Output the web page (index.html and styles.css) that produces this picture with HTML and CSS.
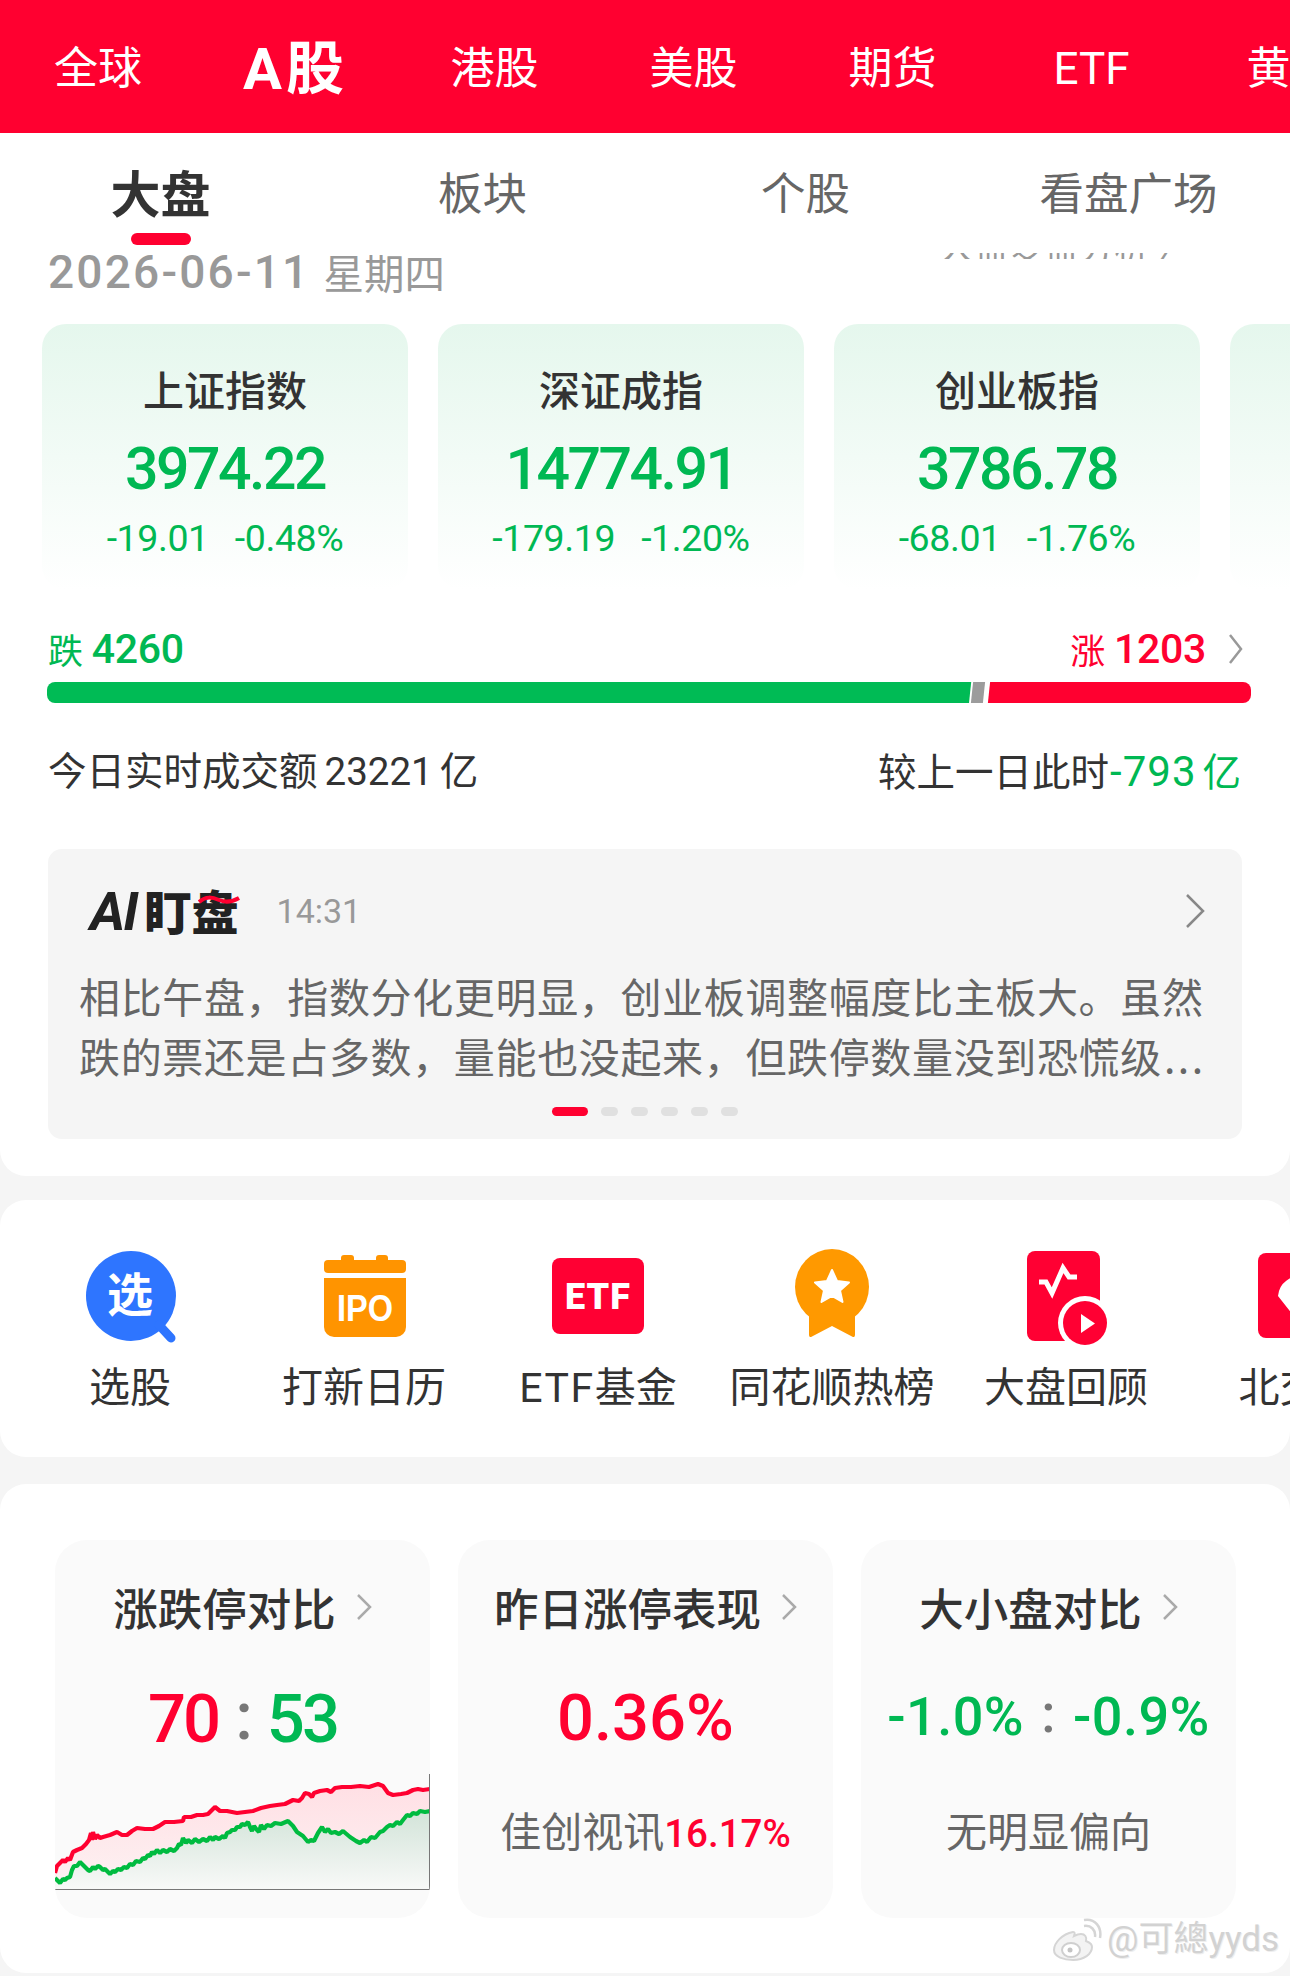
FILE: index.html
```html
<!DOCTYPE html>
<html lang="zh-CN">
<head>
<meta charset="utf-8">
<title>A股 大盘</title>
<link rel="stylesheet" href="styles.css">
</head>
<body>
<div class="page">
  <section class="panel panel-main">
    <nav class="market-nav">
      <span class="market-item">全球</span>
      <span class="market-item market-active">A股</span>
      <span class="market-item">港股</span>
      <span class="market-item">美股</span>
      <span class="market-item">期货</span>
      <span class="market-item">ETF</span>
      <span class="market-item">黄金</span>
    </nav>
    <div class="sub-tabs">
      <span class="sub-tab sub-active">大盘<i class="sub-indicator"></i></span>
      <span class="sub-tab">板块</span>
      <span class="sub-tab">个股</span>
      <span class="sub-tab">看盘广场</span>
    </div>
    <div class="date-row">
      <span class="date-num">2026-06-11</span>
      <span class="date-week">星期四</span>
      <span class="date-clip"><span class="date-link">大盘复盘分析 〉</span></span>
    </div>
    <div class="index-row">
      <div class="index-card">
        <div class="index-name">上证指数</div>
        <div class="index-value">3974.22</div>
        <div class="index-change"><span>-19.01</span><span>-0.48%</span></div>
      </div>
      <div class="index-card">
        <div class="index-name">深证成指</div>
        <div class="index-value">14774.91</div>
        <div class="index-change"><span>-179.19</span><span>-1.20%</span></div>
      </div>
      <div class="index-card">
        <div class="index-name">创业板指</div>
        <div class="index-value">3786.78</div>
        <div class="index-change"><span>-68.01</span><span>-1.76%</span></div>
      </div>
      <div class="index-card"></div>
    </div>
    <div class="count-row">
      <span class="count count-down"><b>跌</b>4260</span>
      <span class="count count-up"><b>涨</b>1203
        <svg class="count-chevron" viewBox="0 0 15 32"><path d="M2 2 L13 16 L2 30"/></svg>
      </span>
    </div>
    <div class="ratio-bar">
      <span class="ratio-down"></span>
      <span class="ratio-flat"></span>
      <span class="ratio-up"></span>
    </div>
    <div class="turnover-row">
      <span>今日实时成交额<span class="turnover-num">23221</span>亿</span>
      <span>较上一日此时<em class="turnover-delta"><span class="turnover-num">-793</span>亿</em></span>
    </div>
    <div class="ai-card">
      <div class="ai-head">
        <span class="ai-logo"><span class="ai-latin">AI</span>盯盘
          <svg class="ai-wave" viewBox="0 0 42 12"><path d="M1 8 C8 2 14 3 21 6 C28 9 34 8 41 4"/></svg>
        </span>
        <span class="ai-time">14:31</span>
        <svg class="ai-chevron" viewBox="0 0 20 36"><path d="M2 2 L18 18 L2 34"/></svg>
      </div>
      <p class="ai-line">相比午盘，指数分化更明显，创业板调整幅度比主板大。虽然</p>
      <p class="ai-line">跌的票还是占多数，量能也没起来，但跌停数量没到恐慌级<span class="ai-more">...</span></p>
      <div class="ai-dots">
        <i class="dot dot-on"></i><i class="dot"></i><i class="dot"></i><i class="dot"></i><i class="dot"></i><i class="dot"></i>
      </div>
    </div>
  </section>

  <section class="panel panel-tools">
    <div class="tool">
      <svg class="tool-icon" viewBox="0 0 100 100">
        <circle cx="51" cy="48" r="45" fill="#2e75ff"/>
        <path d="M79 77 L91 90" stroke="#2e75ff" stroke-width="9" stroke-linecap="round"/>
        <text class="glyph glyph-cjk" x="50" y="63" font-size="46" text-anchor="middle" fill="#fff">选</text>
      </svg>
      <span class="tool-label">选股</span>
    </div>
    <div class="tool">
      <svg class="tool-icon" viewBox="0 0 100 100">
        <rect x="27" y="7" width="13" height="10" rx="3" fill="#ff9400"/>
        <rect x="62" y="7" width="12" height="10" rx="3" fill="#ff9400"/>
        <rect x="10" y="12" width="82" height="13" rx="4" fill="#ff9400"/>
        <path d="M10 30 H92 V79 A10 10 0 0 1 82 89 H20 A10 10 0 0 1 10 79 Z" fill="#ff9400"/>
        <text class="glyph glyph-ipo" x="23" y="73" font-size="37" textLength="56" lengthAdjust="spacingAndGlyphs" fill="#fff">IPO</text>
      </svg>
      <span class="tool-label">打新日历</span>
    </div>
    <div class="tool">
      <svg class="tool-icon" viewBox="0 0 100 100">
        <rect x="4" y="10" width="92" height="76" rx="8" fill="#ff0033"/>
        <text class="glyph" x="50" y="61" font-size="36" letter-spacing="1" text-anchor="middle" fill="#fff">ETF</text>
      </svg>
      <span class="tool-label"><span class="tool-latin">ETF</span>基金</span>
    </div>
    <div class="tool">
      <svg class="tool-icon" viewBox="0 0 100 100">
        <path d="M27 60 V87 Q27 90 30 88.500 L50 78 L70 88.500 Q73 90 73 87 V60 Z" fill="#ff9900"/>
        <ellipse cx="50" cy="39" rx="37" ry="38" fill="#ff9900"/>
        <path d="M50 22 L55 33 L67 34.500 L58 42.500 L60.500 54 L50 48 L39.500 54 L42 42.500 L33 34.500 L45 33 Z" fill="#fff" stroke="#fff" stroke-linejoin="round" stroke-width="2"/>
      </svg>
      <span class="tool-label">同花顺热榜</span>
    </div>
    <div class="tool">
      <svg class="tool-icon" viewBox="0 0 100 100">
        <rect x="11" y="3" width="73" height="90" rx="8" fill="#ff0033"/>
        <path d="M23 34 H30 L36 45 L47 20 L53 29 H61" fill="none" stroke="#fff" stroke-width="5"/>
        <circle cx="69" cy="75" r="27" fill="#fff"/>
        <circle cx="69" cy="75" r="22" fill="#ff0033"/>
        <path d="M65 66 L79 75.500 L65 85 Z" fill="#fff"/>
      </svg>
      <span class="tool-label">大盘回顾</span>
    </div>
    <div class="tool">
      <svg class="tool-icon" viewBox="0 0 100 100">
        <rect x="8" y="5" width="84" height="85" rx="8" fill="#ff0033"/>
        <path d="M28 48 Q29 38 36 33 Q44 27 50 27 Q58 27 64 33 Q71 38 72 48 L50 76 Z" fill="#fff"/>
      </svg>
      <span class="tool-label">北交所</span>
    </div>
  </section>

  <section class="panel panel-compare">
    <div class="compare-card">
      <div class="compare-head"><span>涨跌停对比</span>
        <svg class="compare-chevron" viewBox="0 0 16 28"><path d="M2 2 L14 14 L2 26"/></svg>
      </div>
      <div class="compare-value value-ratio"><span class="up">70</span><span class="colon">:</span><span class="down">53</span></div>
      <svg class="compare-chart" viewBox="0 0 375 116" preserveAspectRatio="none">
        <defs>
          <linearGradient id="greenFill" x1="0" y1="0" x2="0" y2="1">
            <stop offset="0" stop-color="#d3e4d9"/>
            <stop offset="1" stop-color="#f8f9f8"/>
          </linearGradient>
          <linearGradient id="redFill" x1="0" y1="0" x2="0" y2="1">
            <stop offset="0" stop-color="#ffdfe4"/>
            <stop offset="1" stop-color="#fdf1f2"/>
          </linearGradient>
        </defs>
        <path fill="url(#redFill)" d="M0 99 L5 89 18 78 27 74 37 61 48 63 62 58 72 61 82 54 98 55 110 48 128 47 142 41 153 40 160 33 182 39 198 37 215 32 230 30 247 24 250 19 257 21 265 17 287 13 305 12 323 10 335 20 352 19 363 15 375 15 V38 L352 41 348 47 335 51 320 63 305 69 288 58 267 54 253 68 242 58 233 48 212 53 198 58 193 49 182 54 168 63 148 66 128 64 122 74 102 76 95 81 85 87 72 93 57 99 45 93 37 96 25 88 15 103 5 109 0 104 Z"/>
        <path fill="url(#greenFill)" d="M0 104 L5 109 15 103 25 88 37 96 45 93 57 99 72 93 85 87 95 81 102 76 122 74 128 64 148 66 168 63 182 54 193 49 198 58 212 53 233 48 242 58 253 68 267 54 288 58 305 69 320 63 335 51 348 47 352 41 375 38 V115 H0 Z"/>
        <polyline class="line-red" points="0,99 2,92 5,89 8,86 10,88 13,84 15,86 18,78 22,76 27,74 31,70 34,66 36,59 37,66 38,58 40,65 42,61 45,64 48,63 55,61 62,58 67,61 72,61 77,57 82,54 90,55 98,55 104,52 110,48 119,48 128,47 129,43 136,43 142,41 148,41 153,40 157,36 160,33 165,37 172,37 182,39 190,38 198,37 206,34 215,32 222,31 230,30 238,26 244,27 247,24 250,19 254,20 257,23 259,19 265,17 272,16 276,18 280,14 287,13 296,13 305,12 314,13 323,10 328,12 333,19 338,21 346,20 352,19 358,16 363,15 368,16 375,15"/>
        <polyline class="line-green" points="0,104 3,107 5,109 8,105 10,106 12,104 15,103 17,96 19,92 22,92 25,88 28,91 30,93 33,96 35,97 38,93 40,95 43,92 45,93 48,96 50,95 53,98 55,100 58,97 60,98 63,95 66,96 69,93 72,94 75,90 78,91 81,87 85,88 88,84 90,85 93,81 95,82 97,78 99,80 102,76 105,79 108,76 112,78 115,75 119,77 122,74 124,70 126,71 128,64 131,69 133,66 137,69 140,65 144,68 148,65 152,67 155,63 158,66 160,63 164,65 168,62 170,64 172,59 175,58 177,56 180,56 182,53 185,53 187,50 190,51 193,48 195,53 197,57 199,52 202,56 204,58 206,51 209,55 212,51 216,52 220,49 226,50 233,47 238,52 242,58 248,62 253,68 256,66 259,67 263,59 267,53 270,58 273,55 276,59 280,58 284,60 288,57 295,63 301,67 305,69 309,66 312,68 316,63 320,64 325,58 328,57 332,53 335,51 338,52 342,48 345,50 348,46 352,41 355,42 358,39 362,40 365,37 370,38 375,37"/>
        <path class="chart-axis" d="M0 115.500 H374.500 V0"/>
      </svg>
    </div>
    <div class="compare-card">
      <div class="compare-head"><span>昨日涨停表现</span>
        <svg class="compare-chevron" viewBox="0 0 16 28"><path d="M2 2 L14 14 L2 26"/></svg>
      </div>
      <div class="compare-value value-large"><span class="up">0.36%</span></div>
      <div class="compare-sub">佳创视讯<span class="sub-num">16.17%</span></div>
    </div>
    <div class="compare-card">
      <div class="compare-head"><span>大小盘对比</span>
        <svg class="compare-chevron" viewBox="0 0 16 28"><path d="M2 2 L14 14 L2 26"/></svg>
      </div>
      <div class="compare-value value-small"><span class="down">-1.0%</span><span class="colon">:</span><span class="down">-0.9%</span></div>
      <div class="compare-sub">无明显偏向</div>
    </div>
  </section>

  <div class="watermark">
    <svg class="watermark-logo" viewBox="0 0 50 44">
      <path d="M21 14 C10 16 2 25 2 32 C2 39 12 42 21 42 C32 42 40 36 40 29 C40 25 36 24 34 23 C35 19 33 16 29 16 C26 16 24 17 22 18 C23 15 23 14 21 14 Z" fill="#f3f3f3" stroke="#d5d5d5" stroke-width="2"/>
      <ellipse cx="19" cy="32" rx="9" ry="7" fill="#fff" stroke="#cfcfcf" stroke-width="2"/>
      <circle cx="18" cy="32" r="2.500" fill="#c4c4c4"/>
      <path d="M32 8 C39 7 44 12 43 19 M32 2 C43 0 50 9 48 20" fill="none" stroke="#d5d5d5" stroke-width="2.500"/>
    </svg>
    <span>@可總yyds</span>
  </div>
</div>
</body>
</html>
```

FILE: styles.css
```css
* { box-sizing: border-box; }

html, body {
  margin: 0;
  padding: 0;
}

body {
  background: #f5f5f5;
  font-family: "Noto Sans CJK SC", "Noto Sans", sans-serif;
  color: #333;
}

.page {
  position: relative;
  width: 1290px;
  height: 1976px;
  overflow: hidden;
}

.panel {
  background: #fff;
  overflow: hidden;
}

.panel-main {
  border-radius: 0 0 26px 26px;
  padding-bottom: 37px;
}

.panel-tools {
  margin-top: 24px;
  height: 257px;
  padding: 48px 0 0 13px;
  border-radius: 26px;
  display: flex;
}

.panel-compare {
  margin-top: 27px;
  height: 489px;
  padding: 56px 0 0 55px;
  border-radius: 26px;
  display: flex;
  gap: 28px;
}

/* market nav */
.market-nav {
  height: 133px;
  background: #ff0030;
  color: #fff;
  display: flex;
  align-items: center;
  overflow: hidden;
}

.market-item {
  flex: 0 0 199px;
  text-align: center;
  font-size: 44px;
  line-height: 56px;
  white-space: nowrap;
  font-family: "Roboto", "Noto Sans CJK SC", sans-serif;
  padding-top: 4px;
}

.market-item:first-child {
  flex-basis: 196px;
}

.market-active {
  font-size: 58px;
  font-weight: 700;
  letter-spacing: 4px;
}

/* sub tabs */
.sub-tabs {
  height: 120px;
  display: flex;
  align-items: center;
  padding-bottom: 4px;
}

.sub-tab {
  position: relative;
  flex: 0 0 323px;
  text-align: center;
  font-size: 44.5px;
  line-height: 60px;
  color: #666;
  white-space: nowrap;
}

.sub-tab:first-child {
  flex-basis: 321px;
}

.sub-active {
  font-size: 50px;
  font-weight: 700;
  color: #333;
}

.sub-indicator {
  position: absolute;
  left: 131px;
  top: 72px;
  width: 60px;
  height: 12px;
  border-radius: 6px;
  background: #ff0030;
}

/* date */
.date-row {
  height: 71px;
  padding: 0 0 0 48px;
  display: flex;
  align-items: flex-start;
  color: #999;
}

.date-num {
  font-family: "Roboto", sans-serif;
  font-size: 46px;
  font-weight: 500;
  letter-spacing: 2.2px;
  line-height: 38px;
}

.date-week {
  margin-left: 13px;
  font-size: 40.5px;
  line-height: 38px;
}

.date-clip {
  margin-left: auto;
  margin-right: 98px;
  height: 6px;
  display: flex;
  align-items: flex-end;
  overflow: hidden;
}

.date-link {
  font-size: 35px;
  line-height: 34px;
  white-space: nowrap;
  position: relative;
  top: 3px;
}

/* index cards */
.index-row {
  display: flex;
  gap: 30px;
  padding-left: 42px;
  overflow: hidden;
}

.index-card {
  flex: 0 0 366px;
  height: 266px;
  padding-top: 38px;
  border-radius: 24px;
  background: linear-gradient(180deg, #e5f7ed 0%, #ffffff 100%);
  text-align: center;
}

.index-name {
  font-size: 41px;
  line-height: 52px;
  font-weight: 500;
  color: #333;
}

.index-value {
  margin-top: 23px;
  font-family: "Roboto", sans-serif;
  font-size: 59px;
  font-weight: 500;
  letter-spacing: -2.5px;
  line-height: 64px;
  color: #00b853;
}

.index-change {
  margin-top: 16px;
  display: flex;
  justify-content: center;
  gap: 26px;
  font-family: "Roboto", sans-serif;
  font-size: 37.5px;
  line-height: 42px;
  letter-spacing: -0.4px;
  color: #00b853;
}

/* counts */
.count-row {
  margin-top: 36px;
  padding: 0 47px 0 48px;
  height: 46px;
  display: flex;
  justify-content: space-between;
  align-items: center;
}

.count {
  display: flex;
  align-items: center;
  font-family: "Roboto", sans-serif;
  font-size: 41px;
  font-weight: 500;
  letter-spacing: -0.3px;
  line-height: 46px;
}

.count b {
  font-family: "Noto Sans CJK SC", sans-serif;
  font-size: 35px;
  font-weight: 400;
  margin-right: 9px;
}

.count-down { color: #00b853; }
.count-up { color: #ff0030; }

.count-chevron {
  width: 15px;
  height: 32px;
  margin-left: 22px;
  fill: none;
  stroke: #999;
  stroke-width: 2.5;
}

.ratio-bar {
  margin: 10px 39px 0 47px;
  height: 21px;
  display: flex;
  border-radius: 8px;
  overflow: hidden;
}

.ratio-down {
  flex: 0 0 926px;
  background: #00bb55;
  transform: skewX(-6deg);
  transform-origin: bottom;
  margin-left: -4px;
  padding-left: 4px;
}

.ratio-flat {
  flex: 0 0 12px;
  margin-left: 3px;
  background: #9c9c9c;
  transform: skewX(-6deg);
}

.ratio-up {
  flex: 1;
  margin: 0 -4px 0 5px;
  background: #ff0030;
  transform: skewX(-6deg);
}

/* turnover */
.turnover-row {
  margin-top: 44px;
  padding: 0 49px 0 48px;
  height: 50px;
  display: flex;
  justify-content: space-between;
  align-items: center;
  font-size: 38.5px;
  line-height: 50px;
  color: #333;
  font-family: "Roboto", "Noto Sans CJK SC", sans-serif;
}

.turnover-num {
  margin: 0 7px;
}

.turnover-delta {
  font-style: normal;
  color: #00b853;
}

.turnover-delta .turnover-num {
  margin: 0 6px 0 1px;
  font-size: 42px;
  letter-spacing: 1px;
}

/* ai card */
.ai-card {
  margin: 52px 48px 0;
  height: 290px;
  padding: 36px 0 0 31px;
  border-radius: 14px;
  background: #f5f5f5;
}

.ai-head {
  height: 52px;
  display: flex;
  align-items: center;
  padding: 0 37px 0 11px;
  margin-bottom: 28px;
}

.ai-logo {
  position: relative;
  font-family: "Noto Sans CJK SC", sans-serif;
  font-size: 47px;
  font-weight: 900;
  line-height: 52px;
  color: #222;
  white-space: nowrap;
}

.ai-latin {
  font-family: "Roboto", sans-serif;
  font-style: italic;
  font-size: 54px;
  font-weight: 700;
  letter-spacing: -2px;
  margin-right: 8px;
}

.ai-wave {
  position: absolute;
  right: -1px;
  top: 10px;
  width: 42px;
  height: 12px;
  fill: none;
  stroke: #ff0030;
  stroke-width: 4;
}

.ai-time {
  margin-left: 38px;
  font-family: "Roboto", sans-serif;
  font-size: 34px;
  color: #999;
}

.ai-chevron {
  margin-left: auto;
  width: 20px;
  height: 36px;
  fill: none;
  stroke: #888;
  stroke-width: 2.5;
}

.ai-line {
  margin: 0;
  font-size: 41px;
  line-height: 60px;
  letter-spacing: 0.65px;
  color: #666;
  white-space: nowrap;
}

.ai-more {
  letter-spacing: 2.5px;
  margin-left: 2px;
}

.ai-dots {
  margin: 22px 0 0 473px;
  display: flex;
  gap: 13px;
}

.dot {
  width: 17px;
  height: 9px;
  border-radius: 5px;
  background: #e0e0e0;
}

.dot-on {
  width: 36px;
  background: #ff0030;
}

/* tools */
.tool {
  flex: 0 0 234px;
  display: flex;
  flex-direction: column;
  align-items: center;
}

.tool-icon {
  width: 100px;
  height: 100px;
  display: block;
}

.glyph {
  font-family: "Roboto", sans-serif;
  font-weight: 900;
}

.glyph-ipo {
  font-family: "Liberation Sans", sans-serif;
  font-weight: 700;
}

.glyph-cjk {
  font-family: "Noto Sans CJK SC", sans-serif;
  font-weight: 700;
}

.tool-label {
  margin-top: 15px;
  font-family: "Roboto", "Noto Sans CJK SC", sans-serif;
  font-size: 41px;
  line-height: 50px;
  color: #333;
  white-space: nowrap;
}

.tool-latin {
  letter-spacing: 1.5px;
}

/* compare cards */
.compare-card {
  flex: 0 0 375px;
  height: 378px;
  padding-top: 37px;
  border-radius: 32px;
  background: #fafafa;
  text-align: center;
  overflow: hidden;
}

.compare-head {
  height: 60px;
  display: flex;
  justify-content: center;
  align-items: center;
  gap: 20px;
  font-size: 44.5px;
  font-weight: 500;
  line-height: 60px;
  color: #333;
  white-space: nowrap;
}

.compare-chevron {
  width: 16px;
  height: 28px;
  fill: none;
  stroke: #aaa;
  stroke-width: 2.5;
}

.compare-value {
  margin-top: 40px;
  height: 80px;
  display: flex;
  justify-content: center;
  align-items: center;
  font-family: "Roboto", sans-serif;
  font-weight: 500;
  line-height: 80px;
}

.value-ratio {
  font-size: 67px;
  letter-spacing: -3px;
  padding-top: 4px;
}

.value-large {
  font-size: 65px;
  letter-spacing: 0;
  padding-top: 2px;
}

.value-small {
  font-size: 54px;
  letter-spacing: 0.5px;
}

.up { color: #ff0030; }
.down { color: #00b853; }

.colon {
  color: #777;
  margin: 0 17px;
  position: relative;
  top: -3px;
}

.compare-chart {
  display: block;
  width: 375px;
  height: 116px;
  margin-top: 17px;
}

.line-red, .line-green {
  fill: none;
  stroke-width: 4.2;
  stroke-linejoin: bevel;
}

.line-red { stroke: #ff0030; }
.line-green { stroke: #00bb40; }

.chart-axis {
  fill: none;
  stroke: #777;
  stroke-width: 1;
}

.compare-sub {
  margin-top: 47px;
  font-size: 41px;
  line-height: 50px;
  color: #666;
  white-space: nowrap;
}

.sub-num {
  font-family: "Roboto", sans-serif;
  font-size: 38.5px;
  font-weight: 500;
  color: #ff0030;
}

/* watermark */
.watermark {
  position: absolute;
  left: 1052px;
  top: 1918px;
  display: flex;
  align-items: center;
  gap: 5px;
  color: #d2d2d2;
  font-family: "Roboto", "Noto Sans CJK TC", sans-serif;
  font-size: 35px;
  line-height: 44px;
  text-shadow: 1px 1px 0 #eee;
  white-space: nowrap;
}

.watermark-logo {
  width: 50px;
  height: 44px;
}
```
